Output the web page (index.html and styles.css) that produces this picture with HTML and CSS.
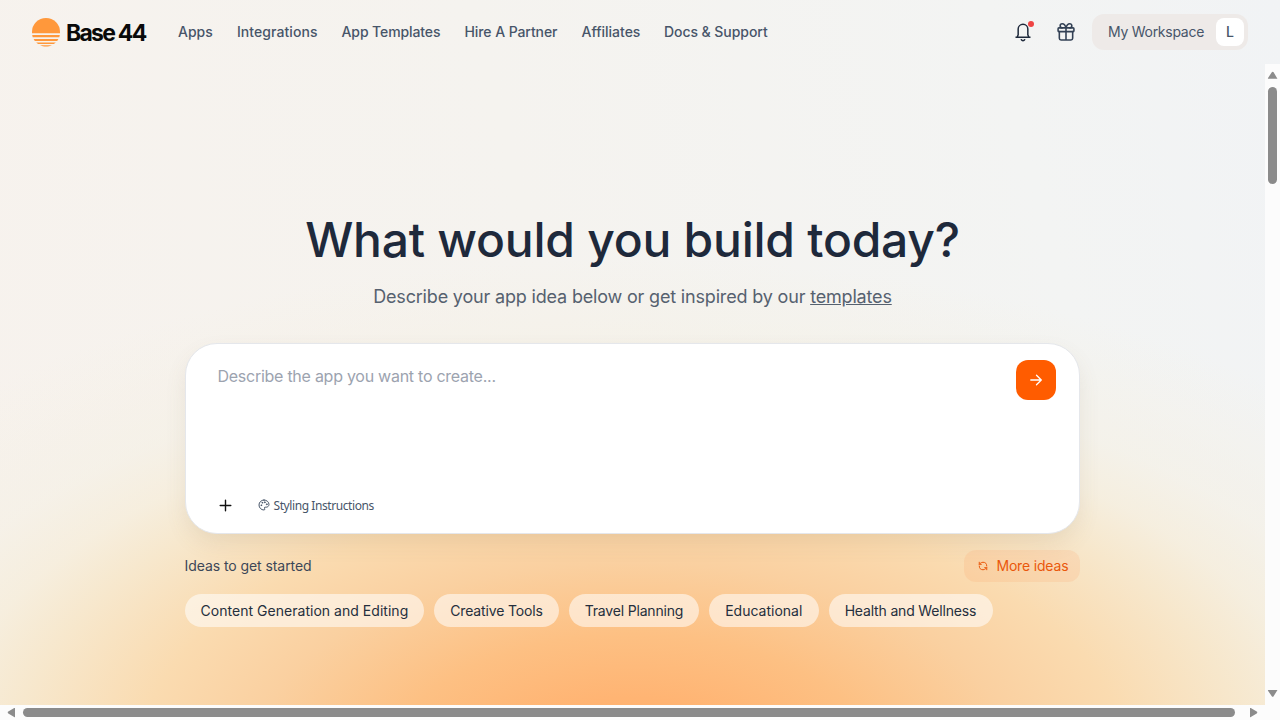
FILE: index.html
```html
<!DOCTYPE html>
<html lang="en">
<head>
<meta charset="utf-8">
<title>Base 44</title>
<link rel="stylesheet" href="styles.css">
</head>
<body>
<div class="app">
  <header class="header">
    <a class="logo">
      <svg class="logo-mark" width="28" height="29" viewBox="0 0 28 29" fill="#ff983b">
        <path d="M0 15.200V14a14 14 0 0 1 28 0v1.200z"/>
        <path d="M.2 17h27.600l-.5 2.200H.7z"/>
        <path d="M1.600 21h24.800l-1.200 2H2.800z"/>
        <path d="M4.200 24.500h19.600l-1.900 1.600H6.100z"/>
        <path d="M8 27.200h12c-3.500 1.700-8.500 1.700-12 0z"/>
      </svg>
      <span class="logo-text">Base 44</span>
    </a>
    <nav class="nav">
      <a class="nav-item apps">Apps</a>
      <a class="nav-item integrations">Integrations</a>
      <a class="nav-item app-templates">App Templates</a>
      <a class="nav-item hire">Hire A Partner</a>
      <a class="nav-item affiliates">Affiliates</a>
      <a class="nav-item docs">Docs &amp; Support</a>
    </nav>
    <div class="actions">
      <button class="icon-btn bell">
        <svg width="20" height="20" viewBox="0 0 24 24" fill="none" stroke="#1e293b" stroke-width="1.800" stroke-linejoin="round"><path d="M3 18.200h18M5 18.200l1.200-3V8.500a5.800 5.800 0 0 1 11.600 0v6.700l1.200 3"/><path d="M10 21.200a2.300 2.300 0 0 0 4 0" stroke-linecap="round"/></svg>
        <span class="dot"></span>
      </button>
      <button class="icon-btn">
        <svg width="20" height="20" viewBox="0 0 24 24" fill="none" stroke="#334155" stroke-width="1.900" stroke-linecap="round" stroke-linejoin="round"><rect x="2.500" y="7" width="19" height="4.500" rx="1"/><path d="M4 11.500v8a2 2 0 0 0 2 2h12a2 2 0 0 0 2-2v-8M12 7v14.500M7.500 7a2.500 2.500 0 0 1 0-5C10 2 11.300 4 12 7c.7-3 2-5 4.500-5a2.500 2.500 0 0 1 0 5"/></svg>
      </button>
      <button class="workspace"><span class="workspace-name">My Workspace</span><span class="avatar">L</span></button>
    </div>
  </header>
  <div class="body">
    <main class="main">
      <h1 class="title">What would you build today?</h1>
      <p class="subtitle">Describe your app idea below or get inspired by our <a class="link">templates</a></p>
      <section class="prompt">
        <div class="prompt-top">
          <span class="placeholder">Describe the app you want to create...</span>
          <button class="send"><svg width="16" height="16" viewBox="0 0 16 16" fill="none" stroke="#fff" stroke-width="1.300" stroke-linecap="round" stroke-linejoin="round"><path d="M2.800 8h10.400M8.500 3.200 13.300 8l-4.800 4.800"/></svg></button>
        </div>
        <div class="prompt-tools">
          <svg width="13" height="13" viewBox="0 0 13 13" stroke="#111" stroke-width="1.400" stroke-linecap="round"><path d="M6.500 1.200v10.600M1.200 6.500h10.600"/></svg>
          <button class="styling">
            <svg width="12" height="12" viewBox="0 0 24 24" fill="none" stroke="#475569" stroke-width="2" stroke-linecap="round" stroke-linejoin="round"><circle cx="13.500" cy="6.500" r=".8"/><circle cx="17.500" cy="10.500" r=".8"/><circle cx="8.500" cy="7.500" r=".8"/><circle cx="6.500" cy="12.500" r=".8"/><path d="M12 2C6.500 2 2 6.500 2 12s4.500 10 10 10c.926 0 1.648-.746 1.648-1.688 0-.437-.18-.835-.437-1.125-.29-.289-.438-.652-.438-1.125a1.640 1.640 0 0 1 1.668-1.668h1.996c3.051 0 5.555-2.503 5.555-5.554C21.965 6.012 17.461 2 12 2z"/></svg>
            <span class="styling-text">Styling Instructions</span>
          </button>
        </div>
      </section>
      <div class="ideas-head">
        <span class="ideas-label">Ideas to get started</span>
        <button class="more"><svg width="10" height="10" viewBox="0 0 24 24" fill="none" stroke="#ea580c" stroke-width="2.400" stroke-linecap="round" stroke-linejoin="round"><path d="M21 12a9 9 0 0 0-9-9 9.750 9.750 0 0 0-6.740 2.740L3 8M3 3v5h5M3 12a9 9 0 0 0 9 9 9.750 9.750 0 0 0 6.740-2.740L21 16M16 16h5v5"/></svg><span class="more-text">More ideas</span></button>
      </div>
      <div class="chips">
        <button class="chip content">Content Generation and Editing</button>
        <button class="chip creative">Creative Tools</button>
        <button class="chip travel">Travel Planning</button>
        <button class="chip educational">Educational</button>
        <button class="chip health">Health and Wellness</button>
      </div>
    </main>
    <div class="vbar">
      <svg width="15" height="23" viewBox="0 0 15 23" fill="#8b8b8b"><path d="M3.500 14.800h8.300a.4.400 0 0 0 .2-.8L8.600 8.200a1 1 0 0 0-1.800 0L3 14a.5.500 0 0 0 .5.800z"/></svg>
      <div class="vthumb"></div>
      <svg class="vdown" width="15" height="23" viewBox="0 0 15 23" fill="#8b8b8b"><path d="M3.500 8h8.300a.4.400 0 0 1 .2.800l-3.400 5.500a1 1 0 0 1-1.800 0L3 8.800a.5.500 0 0 1 .5-.8z"/></svg>
    </div>
  </div>
  <div class="hbar">
    <svg width="23" height="15" viewBox="0 0 23 15" fill="#8b8b8b"><path d="M15 3.500v8.300a.4.400 0 0 1-.8.200L8.300 8.400a1 1 0 0 1 0-1.800L14.200 3a.5.500 0 0 1 .8.500z"/></svg>
    <div class="hthumb"></div>
    <svg width="30" height="15" viewBox="0 0 30 15" fill="#8b8b8b"><path d="M15 3.500v8.300a.4.400 0 0 0 .8.200l5.900-3.600a1 1 0 0 0 0-1.800L15.800 3a.5.500 0 0 0-.8.500z"/></svg>
  </div>
</div>
</body>
</html>
```
FILE: styles.css
```css
* { box-sizing: border-box; }
body { margin: 0; font-family: Inter, "Liberation Sans", sans-serif; }
button { border: 0; padding: 0; background: none; font: inherit; color: inherit; }
.app {
  width: 1280px; height: 720px; overflow: hidden; display: flex; flex-direction: column;
  background:
    radial-gradient(ellipse 820px 422px at 632px 757px, #ffab68 0%, #ffb473 14%, #fdc083 29%, #fad0a0 46%, #fadbb0 60%, rgba(247,231,203,.95) 75%, rgba(246,237,218,.8) 84%, rgba(245,240,228,.6) 94%, rgba(244,242,236,0) 118%),
    linear-gradient(75deg, #f7f2ed 0%, #f5f3ef 45%, #f3f4f3 80%, #f1f3f5 100%);
}
.header { height: 64px; padding: 0 32px; display: flex; align-items: center; flex: none; }
.logo { display: flex; align-items: center; gap: 6px; width: 146px; color: #0a0a0a; }
.logo-text { font-size: 23px; font-weight: 700; letter-spacing: -1.750px; white-space: nowrap; padding-top: 1px; }
.nav { display: flex; gap: 24px; padding-bottom: 2px; font-size: 14px; font-weight: 500; color: #475569; white-space: nowrap; }
.apps { width: 35px; }
.integrations { width: 80.500px; letter-spacing: .06px; }
.app-templates { width: 99px; letter-spacing: -.1px; }
.hire { width: 93px; letter-spacing: -.08px; }
.affiliates { width: 58.500px; }
.docs { width: 104px; letter-spacing: -.06px; }
.actions { margin-left: auto; display: flex; align-items: center; }
.icon-btn { display: flex; position: relative; margin-right: 23px; }
.icon-btn + .icon-btn { margin-right: 16px; }
.dot { position: absolute; width: 6px; height: 6px; border-radius: 50%; background: #ef4444; right: -1px; top: -1px; }
.workspace { display: flex; align-items: center; justify-content: space-between; width: 156px; height: 36px; padding: 0 4px 0 16px; border-radius: 12px; background: #eeeae8; color: #475569; font-size: 14px; }
.workspace-name { letter-spacing: -.27px; padding-bottom: 1px; }
.avatar { width: 28px; height: 28px; padding-bottom: 1px; border-radius: 8px; background: #fff; display: flex; align-items: center; justify-content: center; font-weight: 500; }
.body { flex: 1; display: flex; min-height: 0; }
.main { flex: 1; padding: 146px 184.600px 0 184.500px; }
.title { margin: 0; height: 60px; line-height: 60px; font-size: 48px; font-weight: 450; letter-spacing: -.25px; color: #1e293b; text-align: center; white-space: nowrap; }
.subtitle { margin: 13px 0 0; height: 28px; line-height: 28px; font-size: 18px; letter-spacing: -.175px; color: #56616f; text-align: center; white-space: nowrap; }
.link { text-decoration: underline; }
.prompt { margin-top: 32px; height: 191px; border: 1px solid #e5e7eb; border-radius: 32px; background: #fff; padding: 16px 23.300px 0 32px; box-shadow: 0 10px 24px -4px rgba(120,100,70,.14); display: flex; flex-direction: column; justify-content: space-between; }
.prompt-top { display: flex; justify-content: space-between; }
.placeholder { color: #9ca3af; font-size: 16px; letter-spacing: -.26px; line-height: 32px; white-space: nowrap; }
.send { width: 40px; height: 40px; border-radius: 12px; background: #ff5c00; display: flex; align-items: center; justify-content: center; }
.prompt-tools { display: flex; align-items: center; gap: 26px; height: 32px; margin: 0 0 12px 1px; }
.styling { display: flex; align-items: center; gap: 4px; font-family: "Noto Sans", sans-serif; font-size: 12px; letter-spacing: -.42px; color: #475569; }
.ideas-head { display: flex; justify-content: space-between; align-items: center; margin-top: 16px; height: 32px; font-size: 14px; color: #3d4757; }
.ideas-label { letter-spacing: -.07px; padding-bottom: 1px; }
.more { width: 116.500px; height: 32px; border-radius: 12px; background: rgba(255,140,70,.13); color: #ea580c; display: flex; align-items: center; padding-left: 14px; gap: 8.500px; }
.more-text { letter-spacing: -.17px; padding-bottom: 1px; }
.chips { display: flex; gap: 10.100px; margin-top: 12px; }
.chip { height: 33px; border-radius: 17px; background: rgba(255,255,255,.55); color: #252f3d; font-size: 14px; padding-left: 16px; text-align: left; white-space: nowrap; }
.content { width: 239.600px; letter-spacing: .03px; }
.creative { width: 124.400px; letter-spacing: -.15px; }
.travel { width: 130.400px; letter-spacing: -.18px; }
.educational { width: 109.400px; }
.health { width: 164.300px; letter-spacing: -.17px; }
.vbar { width: 15px; background: #fcfcfc; display: flex; flex-direction: column; align-items: center; }
.vthumb { width: 9px; height: 97px; border-radius: 5px; background: #8b8b8b; }
.vdown { margin-top: auto; }
.hbar { height: 15px; background: #fcfcfc; display: flex; align-items: center; flex: none; }
.hthumb { width: 1212px; height: 9px; border-radius: 5px; background: #8b8b8b; }
```
